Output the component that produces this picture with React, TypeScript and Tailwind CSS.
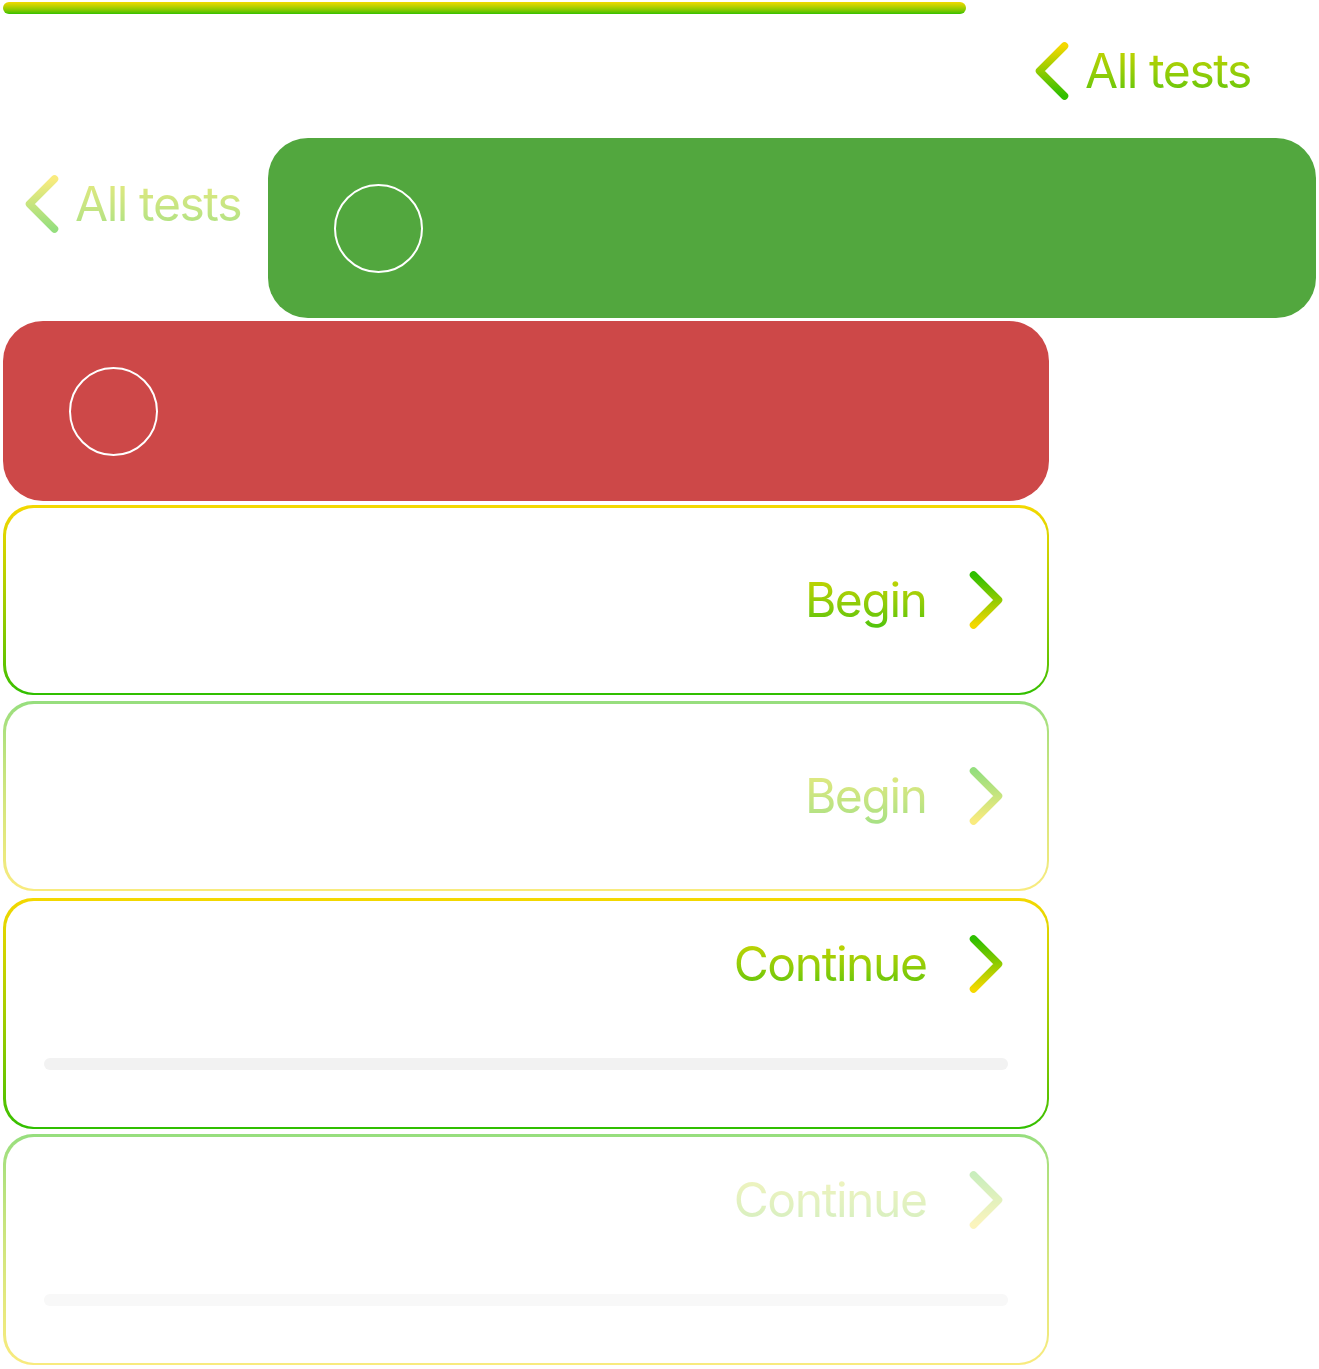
import React from 'react';

const YELLOW = '#f4d800';
const GREEN = '#2ebf00';

function Chevron({ dir, id, flip }: { dir: 'left' | 'right'; id: string; flip?: boolean }) {
  const top = flip ? GREEN : YELLOW;
  const bottom = flip ? YELLOW : GREEN;
  return (
    <svg width="34" height="58" viewBox="0 0 34 58" fill="none" className="shrink-0">
      <defs>
        <linearGradient id={id} x1="0" y1="0" x2="0" y2="1">
          <stop offset="0%" stopColor={top} />
          <stop offset="100%" stopColor={bottom} />
        </linearGradient>
      </defs>
      <path
        d={dir === 'left' ? 'M29.5 4 L4.5 29 L29.5 54' : 'M4.5 4 L29.5 29 L4.5 54'}
        stroke={`url(#${id})`}
        strokeWidth="7.5"
        strokeLinecap="round"
        strokeLinejoin="round"
      />
    </svg>
  );
}

function GradientText({ children }: { children: React.ReactNode }) {
  return (
    <span className="whitespace-nowrap bg-linear-to-b from-[#d2d600] to-[#45c30c] bg-clip-text text-transparent leading-[60px] tracking-[-0.03em]">
      {children}
    </span>
  );
}

function BackLink({ id }: { id: string }) {
  return (
    <div className="flex items-center gap-[16px] text-[48px]">
      <Chevron dir="left" id={id} />
      <GradientText>All tests</GradientText>
    </div>
  );
}

function ActionRow({ label, id }: { label: string; id: string }) {
  return (
    <div className="flex items-center justify-end gap-[42px] pr-[44px] text-[48px]">
      <GradientText>{label}</GradientText>
      <Chevron dir="right" id={id} flip />
    </div>
  );
}

function OutlineCard({
  faded,
  children,
  className,
  spacing
}: {
  faded?: boolean;
  children: React.ReactNode;
  className: string;
  spacing: string;
}) {
  return (
    <div
      className={`${spacing} rounded-[30px] p-[2.5px] ${
        faded
          ? 'bg-linear-to-b from-[#2ebf00] to-[#f4d800] opacity-50'
          : 'bg-linear-to-b from-[#f4d800] to-[#2ebf00]'
      }`}
    >
      <div className={`rounded-[28px] bg-white ${className}`}>{children}</div>
    </div>
  );
}

export default function App() {
  return (
    <div className="w-[1319px] h-[1369px] bg-white font-['Inter','Liberation_Sans',sans-serif]">
      <div className="pt-[2px] pl-[3px]">
        <div className="h-[12px] w-[963px] rounded-full bg-linear-to-b from-[#f2d900] to-[#2ec000]" />
      </div>

      <div className="mt-[27px] flex justify-end pr-[68px]">
        <BackLink id="chev-top" />
      </div>

      <div className="mt-[37px] flex items-start">
        <div className="ml-[25px] mt-[36px] w-[243px] shrink-0 opacity-50">
          <BackLink id="chev-faded" />
        </div>
        <div className="flex h-[180px] w-[1048px] shrink-0 items-center rounded-[40px] bg-[#52a73e]">
          <div className="ml-[66px] h-[89px] w-[89px] rounded-full border-[2.5px] border-white" />
        </div>
      </div>

      <div className="ml-[3px] mt-[3px] flex w-[1046px] flex-col">
        <div className="flex h-[180px] items-center rounded-[40px] bg-[#cd4848]">
          <div className="ml-[66px] h-[89px] w-[89px] rounded-full border-[2.5px] border-white" />
        </div>

        <OutlineCard spacing="mt-[4px]" className="flex h-[185px] items-center justify-end">
          <ActionRow label="Begin" id="chev-b1" />
        </OutlineCard>

        <OutlineCard spacing="mt-[6px]" faded className="flex h-[185px] items-center justify-end">
          <ActionRow label="Begin" id="chev-b2" />
        </OutlineCard>

        <OutlineCard spacing="mt-[7px]" className="flex h-[226px] flex-col pt-[33.5px]">
          <ActionRow label="Continue" id="chev-c1" />
          <div className="mx-[38.5px] mt-[64px] h-[12px] rounded-full bg-[#f2f2f2]" />
        </OutlineCard>

        <OutlineCard spacing="mt-[5px]" faded className="flex h-[226px] flex-col pt-[33.5px]">
          <div className="opacity-50">
            <ActionRow label="Continue" id="chev-c2" />
          </div>
          <div className="mx-[38.5px] mt-[64px] h-[12px] rounded-full bg-[#f2f2f2]" />
        </OutlineCard>
      </div>
    </div>
  );
}
